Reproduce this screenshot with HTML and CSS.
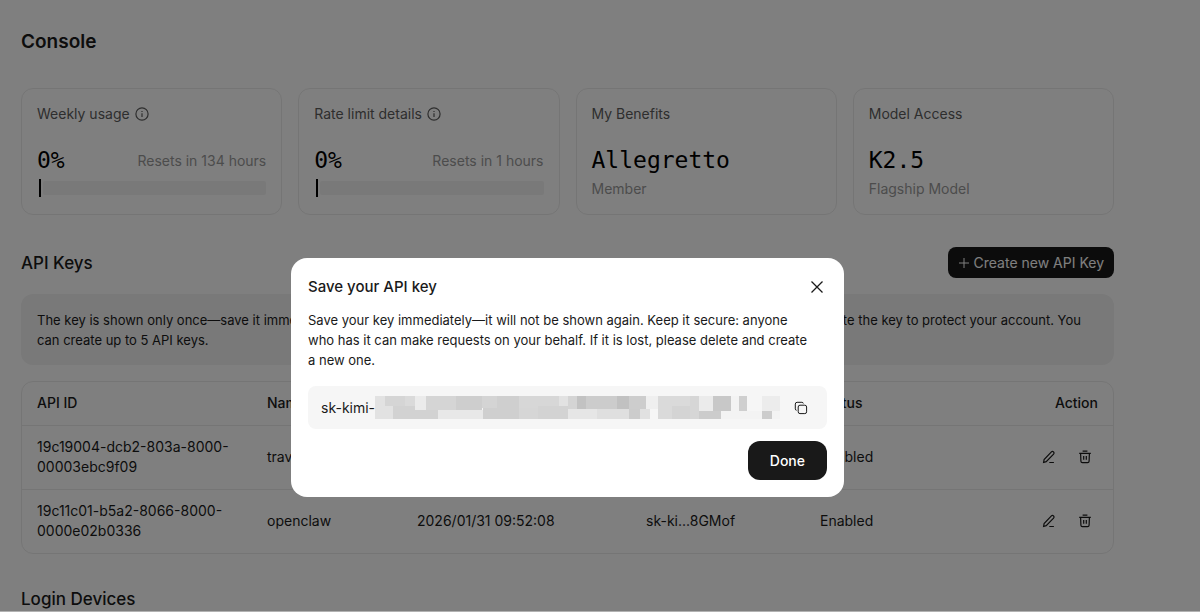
FILE: index.html
```html
<!DOCTYPE html>
<html lang="en">
<head>
 <meta charset="UTF-8">
 <meta name="viewport" content="width=device-width, initial-scale=1">
 <title>Console</title>
 <link rel="stylesheet" href="styles.css">
</head>
<body>
 <!-- Shared icons -->
 <svg class="icon-defs" xmlns="http://www.w3.org/2000/svg">
  <symbol id="icon-info" viewBox="0 0 14 14">
   <circle cx="7" cy="7" r="6.1"/><path d="M7 6.3v3.7M7 3.9v1"/>
  </symbol>
  <symbol id="icon-edit" viewBox="0 0 14 14">
   <path d="M1.6 12.4l.5-2.9 7.3-7.6a1.5 1.5 0 0 1 2.1 0l.1.1a1.5 1.5 0 0 1 0 2.1l-7.4 7.5zM7.3 12.5h4.6"/>
  </symbol>
  <symbol id="icon-trash" viewBox="0 0 14 14">
   <path d="M1.2 3.3h11.6M4.6 1.1h4.8M2.6 3.3l.3 8a1.4 1.4 0 0 0 1.4 1.3h5.4a1.4 1.4 0 0 0 1.4-1.3l.3-8M5.7 6v3.8M8.3 6v3.8"/>
  </symbol>
 </svg>

 <main class="console">
  <h1>Console</h1>

  <section class="cards">
   <div class="card">
    <div class="card-label">Weekly usage <svg class="icon"><use href="#icon-info"/></svg></div>
    <div class="card-row">
     <span class="card-value">0%</span>
     <span class="card-note">Resets in 134 hours</span>
    </div>
    <div class="usage"><span class="usage-tick"></span><span class="usage-track"></span></div>
   </div>
   <div class="card">
    <div class="card-label">Rate limit details <svg class="icon"><use href="#icon-info"/></svg></div>
    <div class="card-row">
     <span class="card-value">0%</span>
     <span class="card-note">Resets in 1 hours</span>
    </div>
    <div class="usage"><span class="usage-tick"></span><span class="usage-track"></span></div>
   </div>
   <div class="card">
    <div class="card-label">My Benefits</div>
    <div class="card-row"><span class="card-value">Allegretto</span></div>
    <div class="card-note">Member</div>
   </div>
   <div class="card">
    <div class="card-label">Model Access</div>
    <div class="card-row"><span class="card-value">K2.5</span></div>
    <div class="card-note">Flagship Model</div>
   </div>
  </section>

  <div class="section-head">
   <h2>API Keys</h2>
   <button class="create-button" type="button">
    <svg class="icon-plus" viewBox="0 0 12 12"><path d="M6 1v10M1 6h10"/></svg>
    Create new API Key
   </button>
  </div>

  <p class="notice">The key is shown only once—save it immediately. Do not share it with others or expose it in any client-side code. If it is leaked, delete the key to protect your account. You can create up to 5 API keys.</p>

  <div class="table-box">
   <table class="keys">
    <thead>
     <tr>
      <th class="col-id">API ID</th>
      <th class="col-name">Name</th>
      <th class="col-date">Created</th>
      <th class="col-key">Key</th>
      <th class="col-status">Status</th>
      <th class="col-action">Action</th>
     </tr>
    </thead>
    <tbody>
     <tr>
      <td>19c19004-dcb2-803a-8000-00003ebc9f09</td>
      <td>travel</td>
      <td></td>
      <td></td>
      <td>Enabled</td>
      <td>
       <div class="actions">
        <button type="button" aria-label="Edit"><svg class="icon"><use href="#icon-edit"/></svg></button>
        <button type="button" aria-label="Delete"><svg class="icon"><use href="#icon-trash"/></svg></button>
       </div>
      </td>
     </tr>
     <tr>
      <td>19c11c01-b5a2-8066-8000-0000e02b0336</td>
      <td>openclaw</td>
      <td>2026/01/31 09:52:08</td>
      <td>sk-ki...8GMof</td>
      <td>Enabled</td>
      <td>
       <div class="actions">
        <button type="button" aria-label="Edit"><svg class="icon"><use href="#icon-edit"/></svg></button>
        <button type="button" aria-label="Delete"><svg class="icon"><use href="#icon-trash"/></svg></button>
       </div>
      </td>
     </tr>
    </tbody>
   </table>
  </div>

  <h2 class="devices-title">Login Devices</h2>
 </main>

 <div class="overlay">
  <div class="modal" role="dialog" aria-modal="true" aria-labelledby="modalTitle">
   <div class="modal-head">
    <h3 id="modalTitle">Save your API key</h3>
    <button class="close-button" type="button" aria-label="Close">
     <svg viewBox="0 0 20 20"><path d="M4.5 4.5l11 11M15.5 4.5l-11 11"/></svg>
    </button>
   </div>
   <p class="modal-text">Save your key immediately—it will not be shown again. Keep it secure: anyone<br>who has it can make requests on your behalf. If it is lost, please delete and create<br>a new one.</p>
   <div class="key-box">
    <span class="key-prefix">sk-kimi-</span>
    <!-- Masked part of the key -->
    <svg class="key-mask" viewBox="0 0 406 23" preserveAspectRatio="none" shape-rendering="crispEdges">
     <path fill="#e2e2e2" d="M0 0h18v23H0z"/>
     <path fill="#d5d5d5" d="M10 0h20v10H10z"/>
     <path fill="#dadada" d="M30 0h10v10H30z"/>
     <path fill="#d2d2d2" d="M18 10h45v13H18z"/>
     <path fill="#ebebeb" d="M40 0h11v14H40z"/>
     <path fill="#d5d5d5" d="M51 0h30v14H51z"/>
     <path fill="#cecece" d="M81 0h26v14H81z"/>
     <path fill="#e8e8e8" d="M63 14h45v9H63z"/>
     <path fill="#cfcfcf" d="M108 0h36v23h-36z"/>
     <path fill="#d4d4d4" d="M107 0h15v12h-15z"/>
     <path fill="#d7d7d7" d="M144 0h40v12h-40z"/>
     <path fill="#d6d6d6" d="M144 12h19v11h-19z"/>
     <path fill="#d3d3d3" d="M163 10h30v13h-30z"/>
     <path fill="#e2e2e2" d="M184 0h10v10h-10z"/>
     <path fill="#d4d4d4" d="M194 0h9v13h-9z"/>
     <path fill="#c2c2c2" d="M203 0h9v13h-9z"/>
     <path fill="#cccccc" d="M212 0h31v13h-31z"/>
     <path fill="#c1c1c1" d="M243 0h12v13h-12z"/>
     <path fill="#cdcdcd" d="M255 0h17v13h-17z"/>
     <path fill="#e6e6e6" d="M193 13h30v10h-30z"/>
     <path fill="#dfdfdf" d="M223 13h32v10h-32z"/>
     <path fill="#cccccc" d="M255 13h11v10h-11z"/>
     <path fill="#e1e1e1" d="M266 13h10v10h-10z"/>
     <path fill="#efefef" d="M272 0h12v13h-12z"/>
     <path fill="#dadada" d="M284 0h32v23h-32z"/>
     <path fill="#d4d4d4" d="M298 10h18v13h-18z"/>
     <path fill="#d6d6d6" d="M316 0h9v23h-9z"/>
     <path fill="#ebebeb" d="M325 0h14v15h-14z"/>
     <path fill="#c8c8c8" d="M339 0h18v15h-18z"/>
     <path fill="#cccccc" d="M325 15h22v8h-22z"/>
     <path fill="#f3f3f3" d="M347 15h41v8h-41zM357 0h8v15h-8z"/>
     <path fill="#cfcfcf" d="M365 0h8v15h-8z"/>
     <path fill="#ececec" d="M388 0h18v15h-18z"/>
     <path fill="#cccccc" d="M388 15h10v8h-10z"/>
     <path fill="#f3f3f3" d="M398 15h8v8h-8z"/>
    </svg>
    <button class="copy-button" type="button" aria-label="Copy">
     <svg viewBox="0 0 14 14"><rect x="4.2" y="4.2" width="8.4" height="8.4" rx="1.8"/><path d="M2.6 9.3a1.4 1.4 0 0 1-1.3-1.4V3.1a1.8 1.8 0 0 1 1.8-1.8h4.8a1.4 1.4 0 0 1 1.4 1.2"/></svg>
    </button>
   </div>
   <button class="done-button" type="button">Done</button>
  </div>
 </div>
</body>
</html>
```

FILE: styles.css
```css
:root {
 --text-color: #1a1a1a;
 --label-color: #5c5c5c;
 --note-color: #999999;
 --line-color: #ebebeb;
 --fill-color: #f2f2f2;
 --dark-color: #191919;
}

* {
 box-sizing: border-box;
}

body {
 margin: 0;
 height: 100vh;
 overflow: hidden;
 font-family: Inter, "Liberation Sans", sans-serif;
 font-size: 14px;
 line-height: 20px;
 color: var(--text-color);
 background-color: #ffffff;
}

h1, h2, h3, p {
 margin: 0;
}

button {
 font: inherit;
 color: inherit;
 border: none;
 padding: 0;
 background: none;
 cursor: pointer;
}

svg {
 display: block;
 fill: none;
 stroke: currentColor;
}

.icon-defs {
 display: none;
}

.icon {
 width: 14px;
 height: 14px;
 stroke-width: 1.2;
}

.console {
 padding: 28px 86px 0 21px;
}

h1 {
 font-size: 19px;
 line-height: 28px;
 font-weight: 600;
}

h2 {
 font-size: 17px;
 line-height: 28px;
 font-weight: 500;
}

/* Usage cards */
.cards {
 display: grid;
 grid-template-columns: repeat(4, 1fr);
 gap: 16px;
 margin-top: 32px;
}

.card {
 padding: 15px;
 border: 1px solid var(--line-color);
 border-radius: 12px;
}

.card-label {
 display: flex;
 align-items: center;
 gap: 5px;
 color: var(--label-color);
}

.card-row {
 display: flex;
 justify-content: space-between;
 align-items: center;
 height: 32px;
 margin: 20px 0 3px;
}

.card-value {
 font-family: "DejaVu Sans Mono", monospace;
 font-size: 23px;
 line-height: 32px;
 color: #000000;
}

.card-note {
 color: var(--note-color);
}

.card-row .card-note {
 padding-top: 2px;
}

.usage {
 display: flex;
 align-items: center;
 gap: 2px;
 height: 18px;
 padding-left: 2px;
}

.usage-tick {
 width: 2px;
 height: 18px;
 background-color: #000000;
}

.usage-track {
 flex: 1;
 height: 14px;
 border-radius: 2px;
 background-color: var(--fill-color);
}

/* API keys */
.section-head {
 display: flex;
 justify-content: space-between;
 align-items: center;
 margin-top: 32px;
}

.create-button {
 display: flex;
 align-items: center;
 gap: 4px;
 height: 31px;
 padding: 0 10px;
 border-radius: 8px;
 background-color: var(--dark-color);
 color: #ffffff;
}

.icon-plus {
 width: 12px;
 height: 12px;
}

.notice {
 margin-top: 16px;
 padding: 16px 16px 15px;
 border-radius: 12px;
 background-color: var(--fill-color);
 font-size: 13px;
}

.table-box {
 margin-top: 16px;
 border: 1px solid var(--line-color);
 border-radius: 12px;
}

.keys {
 width: 100%;
 table-layout: fixed;
 border-collapse: collapse;
}

.keys th {
 height: 43px;
 padding: 0 15px;
 font-weight: 500;
 text-align: left;
}

.keys td {
 height: 64px;
 padding: 0 15px;
 border-top: 1px solid var(--line-color);
}

.col-id {
 width: 230px;
}

.col-name {
 width: 150px;
}

.col-date {
 width: 229px;
}

.col-key, .col-status {
 width: 174px;
}

.keys .col-action {
 text-align: right;
}

.actions {
 display: flex;
 justify-content: flex-end;
 gap: 22px;
 padding-right: 6px;
}

.devices-title {
 margin-top: 31px;
}

/* Modal */
.overlay {
 position: fixed;
 inset: 0;
 display: flex;
 justify-content: center;
 align-items: flex-start;
 padding: 258px 65px 0 0;
 border-bottom: 1px solid rgba(0, 0, 0, 0.3);
 background-color: rgba(0, 0, 0, 0.5);
 background-clip: padding-box;
}

.modal {
 display: flex;
 flex-direction: column;
 width: 553px;
 padding: 17px;
 border-radius: 16px;
 background-color: #ffffff;
}

.modal-head {
 display: flex;
 justify-content: space-between;
 align-items: center;
}

h3 {
 font-size: 15px;
 line-height: 24px;
 font-weight: 500;
}

.close-button svg {
 width: 20px;
 height: 20px;
 stroke-width: 1.3;
}

.modal-text {
 margin-top: 11px;
 font-size: 13px;
}

.key-box {
 display: flex;
 align-items: center;
 height: 43px;
 margin-top: 16px;
 padding: 0 19px 0 13px;
 border-radius: 8px;
 background-color: #f6f6f6;
}

.key-mask {
 flex: 1;
 height: 23px;
 margin-right: 14px;
 stroke: none;
}

.copy-button svg {
 width: 14px;
 height: 14px;
}

.done-button {
 align-self: flex-end;
 height: 39px;
 margin-top: 12px;
 padding: 0 22px;
 border-radius: 12px;
 background-color: var(--dark-color);
 color: #ffffff;
 font-weight: 500;
}
```
